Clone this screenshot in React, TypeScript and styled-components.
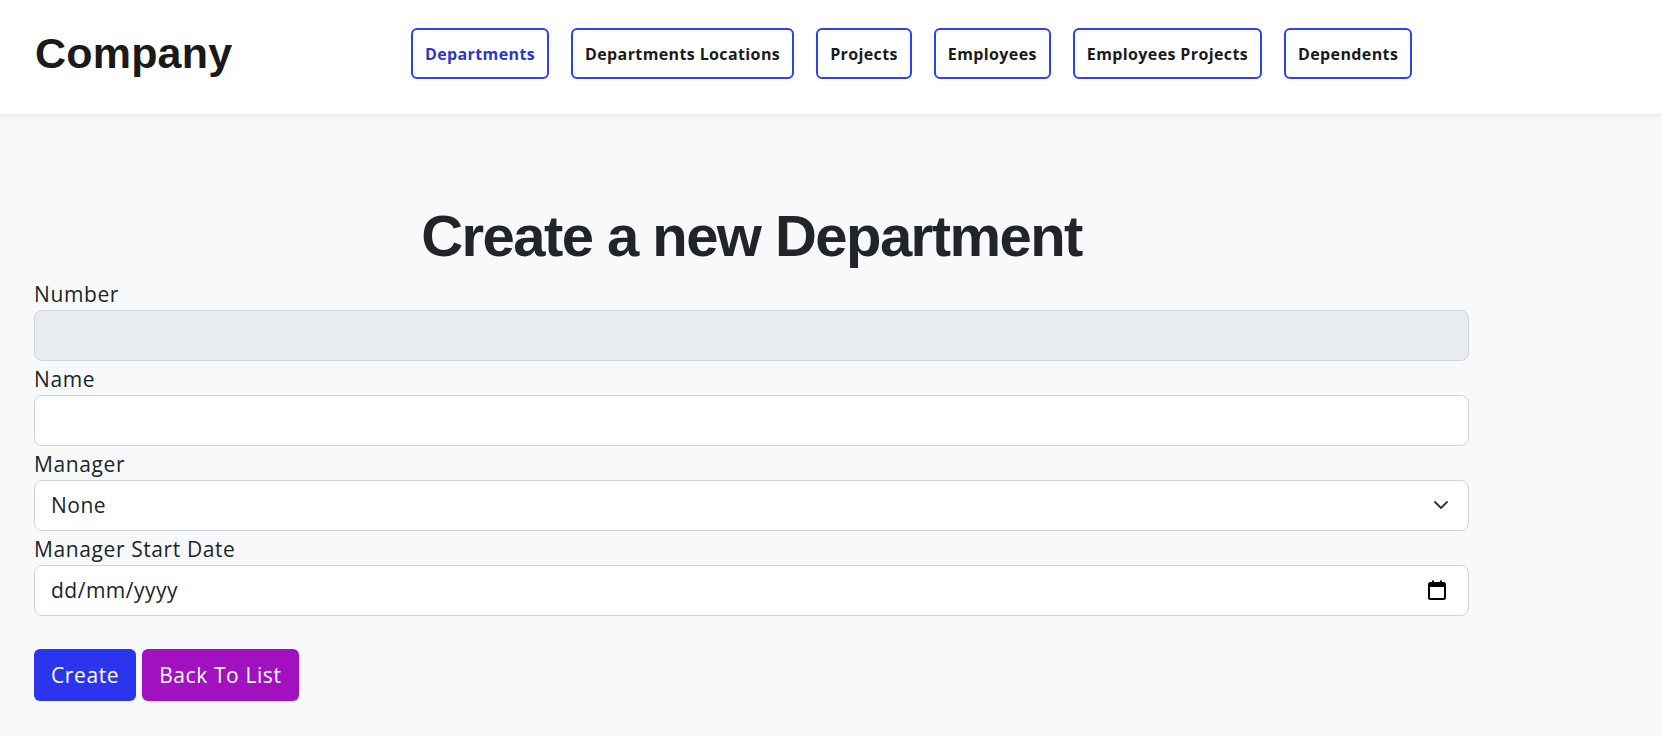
import React from "react";
import styled, { createGlobalStyle } from "styled-components";

const GlobalStyle = createGlobalStyle`
  html, body {
    margin: 0;
    padding: 0;
    background: #f8f9fa;
    font-family: "Open Sans", "Noto Sans", sans-serif;
    color: #212529;
  }
  * { box-sizing: border-box; }
`;

const Page = styled.div`
  min-height: 736px;
  background: #f8f9fa;
`;

const Header = styled.header`
  height: 114px;
  padding: 0 0 7px 35px;
  background: #ffffff;
  box-shadow: 0 2px 5px rgba(0, 0, 0, 0.07);
  display: grid;
  grid-template-columns: 376px 1fr;
  align-items: center;
  position: relative;
  z-index: 1;
`;

const Brand = styled.div`
  font-family: "Liberation Sans", Arial, sans-serif;
  font-weight: 700;
  font-size: 43px;
  color: #1a1a1a;
  letter-spacing: 0.2px;
`;

const Nav = styled.nav`
  display: flex;
  gap: 22px;
  align-items: center;
`;

const NavButton = styled.a<{ $active?: boolean }>`
  display: flex;
  align-items: center;
  height: 51px;
  padding: 0 12px;
  border: 2px solid #3041f0;
  border-radius: 6px;
  background: #ffffff;
  font-size: 16px;
  font-weight: 700;
  letter-spacing: 0.38px;
  color: ${(p) => (p.$active ? "#2b37c9" : "#1a1a1a")};
  text-decoration: none;
  white-space: nowrap;
`;

const Main = styled.main`
  padding: 87px 34px 0 34px;
`;

const Form = styled.form`
  width: 1435px;
  display: flex;
  flex-direction: column;
`;

const Title = styled.h1`
  margin: 0 0 8px 0;
  text-align: center;
  font-family: "Liberation Sans", Arial, sans-serif;
  font-weight: 700;
  font-size: 58px;
  line-height: 1.2;
  letter-spacing: -1.55px;
  color: #212529;
`;

const Group = styled.div`
  display: flex;
  flex-direction: column;
  margin-bottom: 3px;
`;

const Label = styled.label`
  font-size: 21px;
  line-height: 30px;
  letter-spacing: 0.6px;
  margin-bottom: 1px;
  color: #212529;
`;

const fieldCss = `
  width: 100%;
  height: 51px;
  padding: 0 16px;
  font-family: "Open Sans", "Noto Sans", sans-serif;
  font-size: 21px;
  letter-spacing: 0.5px;
  color: #212529;
  border: 1px solid #ced4da;
  border-radius: 8px;
  background: #ffffff;
  outline: none;
`;

const Input = styled.input<{ $disabled?: boolean }>`
  ${fieldCss}
  background: ${(p) => (p.$disabled ? "#e9ecef" : "#ffffff")};
`;

const SelectWrap = styled.div`
  position: relative;
`;

const Select = styled.select`
  ${fieldCss}
  appearance: none;
  -webkit-appearance: none;
`;

const Chevron = styled.svg`
  position: absolute;
  right: 20px;
  top: 50%;
  transform: translateY(-50%);
  pointer-events: none;
`;

const DateField = styled.div`
  ${fieldCss}
  display: flex;
  align-items: center;
  justify-content: space-between;
  padding-right: 22px;
`;

const DateText = styled.span`
  color: #212529;
`;

const Actions = styled.div`
  display: flex;
  gap: 6px;
  margin-top: 30px;
`;

const Button = styled.button<{ $variant: "primary" | "purple" }>`
  height: 52px;
  padding: 0 17px;
  border: none;
  border-radius: 6px;
  font-family: "Open Sans", "Noto Sans", sans-serif;
  font-size: 21px;
  letter-spacing: 0.6px;
  color: #ffffff;
  background: ${(p) => (p.$variant === "primary" ? "#2b35f0" : "#a111bf")};
  cursor: pointer;
`;

const navItems = [
  "Departments",
  "Departments Locations",
  "Projects",
  "Employees",
  "Employees Projects",
  "Dependents",
];

export default function App() {
  return (
    <Page>
      <GlobalStyle />
      <Header>
        <Brand>Company</Brand>
        <Nav>
          {navItems.map((item, i) => (
            <NavButton key={item} href="#" $active={i === 0}>
              {item}
            </NavButton>
          ))}
        </Nav>
      </Header>
      <Main>
        <Form onSubmit={(e) => e.preventDefault()}>
          <Title>Create a new Department</Title>
          <Group>
            <Label>Number</Label>
            <Input $disabled disabled />
          </Group>
          <Group>
            <Label>Name</Label>
            <Input />
          </Group>
          <Group>
            <Label>Manager</Label>
            <SelectWrap>
              <Select defaultValue="none">
                <option value="none">None</option>
              </Select>
              <Chevron width="16" height="16" viewBox="0 0 16 16" fill="none">
                <path
                  d="M2 5l6 6 6-6"
                  stroke="#343a40"
                  strokeWidth="2"
                  strokeLinecap="round"
                  strokeLinejoin="round"
                />
              </Chevron>
            </SelectWrap>
          </Group>
          <Group>
            <Label>Manager Start Date</Label>
            <DateField>
              <DateText>dd/mm/yyyy</DateText>
              <svg width="18" height="20" viewBox="0 0 18 20" fill="none">
                <rect x="1" y="3" width="16" height="16" rx="1.5" stroke="#000" strokeWidth="2" />
                <rect x="1" y="3" width="16" height="4" fill="#000" />
                <rect x="4" y="0.5" width="2" height="3" fill="#000" />
                <rect x="12" y="0.5" width="2" height="3" fill="#000" />
              </svg>
            </DateField>
          </Group>
          <Actions>
            <Button type="submit" $variant="primary">
              Create
            </Button>
            <Button type="button" $variant="purple">
              Back To List
            </Button>
          </Actions>
        </Form>
      </Main>
    </Page>
  );
}
